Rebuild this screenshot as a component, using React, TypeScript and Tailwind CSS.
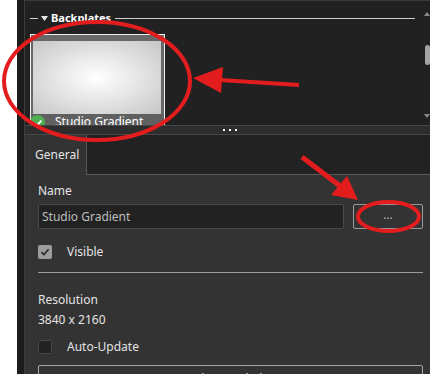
import React from "react";

const Checkbox = ({ checked }: { checked?: boolean }) =>
  checked ? (
    <div className="flex h-[14px] w-[14px] shrink-0 items-center justify-center rounded-[2px] bg-[#9c9c9c]">
      <svg width="10" height="10" viewBox="0 0 10 10">
        <path d="M1.5 5.2 L4 7.6 L8.6 2.2" fill="none" stroke="#2a2a2a" strokeWidth="1.6" />
      </svg>
    </div>
  ) : (
    <div className="h-[14px] w-[14px] shrink-0 rounded-[2px] border border-[#474747] bg-[#232323]" />
  );

export default function App() {
  return (
    <div className="relative flex h-[374px] w-[430px] overflow-hidden bg-white font-['Noto_Sans',sans-serif] text-[12px] leading-[16px]">
      {/* window edge */}
      <div className="w-[17px] shrink-0 bg-white" />
      <div className="w-[7px] shrink-0 bg-[#1c1c1c]" />

      <div className="flex min-w-0 flex-1 flex-col border-l border-[#3c3c3c]">
        {/* Backplates list */}
        <div className="flex h-[125px] shrink-0 overflow-hidden border-t border-[#3a3a3a] bg-[#212121]">
          <div className="flex min-w-0 flex-1 flex-col pl-[5px] pr-[9px] pt-[10px]">
            <div className="flex h-[14px] items-center">
              <div className="h-px w-[8px] bg-[#cfcfcf]" />
              <svg width="7" height="5" viewBox="0 0 7 5" className="ml-[3px]">
                <path d="M0 0 H7 L3.5 5 Z" fill="#e8e8e8" />
              </svg>
              <span className="ml-[3px] text-[11px] font-bold leading-[14px] text-white">Backplates</span>
              <div className="ml-[4px] h-px flex-1 bg-[#cfcfcf]" />
            </div>

            <div className="relative mt-[9px] w-[135px] border-x border-t border-[#f0f0f0] bg-[#686868]">
              <div className="pl-[2px] pr-[3px] pt-[6px]">
                <div className="h-[73px] w-[128px] bg-[radial-gradient(ellipse_at_center,#ffffff_0%,#e6e6e6_45%,#c6c6c6_100%)]" />
              </div>
              <div className="h-[14px] bg-[#606060] pl-[24px] leading-[15px] text-white">Studio Gradient</div>
              <div className="absolute left-[-1px] top-[80px] flex h-[15px] w-[15px] items-center justify-center rounded-full bg-[#4caf50]">
                <svg width="10" height="10" viewBox="0 0 10 10">
                  <path d="M1.8 5.2 L4 7.4 L8.4 2.6" fill="none" stroke="white" strokeWidth="1.8" />
                </svg>
              </div>
            </div>
          </div>

          {/* scrollbar */}
          <div className="flex w-[6px] shrink-0 flex-col items-center">
            <svg width="6" height="4" viewBox="0 0 6 4" className="mt-[11px]">
              <path d="M0 4 L3 0 L6 4 Z" fill="#8a8a8a" />
            </svg>
            <div className="ml-[1px] mt-[29px] h-[20px] w-[5px] rounded-[3px] bg-[#a3a3a3]" />
            <svg width="6" height="4" viewBox="0 0 6 4" className="mb-[7px] mt-auto">
              <path d="M0 0 L3 4 L6 0 Z" fill="#8a8a8a" />
            </svg>
          </div>
        </div>

        {/* splitter */}
        <div className="flex h-[10px] shrink-0 items-center justify-center gap-[4px] border-y border-[#474747] bg-[#2d2d2d] pl-[4px]">
          <div className="h-[2px] w-[2px] bg-white" />
          <div className="h-[2px] w-[2px] bg-white" />
          <div className="h-[2px] w-[2px] bg-white" />
        </div>

        {/* properties */}
        <div className="flex flex-1 flex-col bg-[#333333] text-[#e4e4e4]">
          <div className="flex h-[40px] shrink-0">
            <div className="flex w-[61px] items-center pl-[10px]">General</div>
            <div className="flex-1 border-b border-l border-[#585858] bg-[#222222]" />
          </div>

          <div className="flex flex-col pl-[13px] pr-[7px] pt-[8px]">
            <div>Name</div>
            <div className="mt-[5px] flex h-[25px] gap-[9px]">
              <div className="flex flex-1 items-center rounded-[2px] border border-[#4a4a4a] bg-[#222222] pl-[3px] text-[#bdbdbd]">
                Studio Gradient
              </div>
              <button className="flex w-[70px] items-center justify-center rounded-[2px] border border-[#9a9a9a] pb-[3px] text-[#b0b0b0]">
                ...
              </button>
            </div>

            <div className="mt-[16px] flex h-[14px] items-center">
              <Checkbox checked />
              <span className="ml-[15px] leading-[14px]">Visible</span>
            </div>

            <div className="mt-[13px] h-px bg-[#9c9c9c]" />

            <div className="mt-[19px]">Resolution</div>
            <div className="mt-[4px]">3840 x 2160</div>

            <div className="mt-[12px] flex h-[14px] items-center">
              <Checkbox />
              <span className="ml-[15px] leading-[14px]">Auto-Update</span>
            </div>

            <button className="mt-[11px] flex h-[28px] items-center justify-center rounded-[2px] border border-[#a8a8a8]">
              Update Backplate
            </button>
          </div>
        </div>
      </div>

      {/* red annotations */}
      <svg className="pointer-events-none absolute inset-0" width="430" height="374" viewBox="0 0 430 374">
        <ellipse cx="97" cy="81" rx="93" ry="59" fill="none" stroke="#e31d1d" strokeWidth="4" />
        <line x1="299" y1="85" x2="220" y2="80" stroke="#e31d1d" strokeWidth="4" />
        <path d="M193 78 L223 67 L221 93 Z" fill="#e31d1d" />
        <line x1="302" y1="157" x2="340" y2="186" stroke="#e31d1d" strokeWidth="5" />
        <path d="M358 200 L331 195 L347 176 Z" fill="#e31d1d" />
        <ellipse cx="388.5" cy="216.5" rx="30.5" ry="14.5" fill="none" stroke="#e31d1d" strokeWidth="4" />
      </svg>
    </div>
  );
}
